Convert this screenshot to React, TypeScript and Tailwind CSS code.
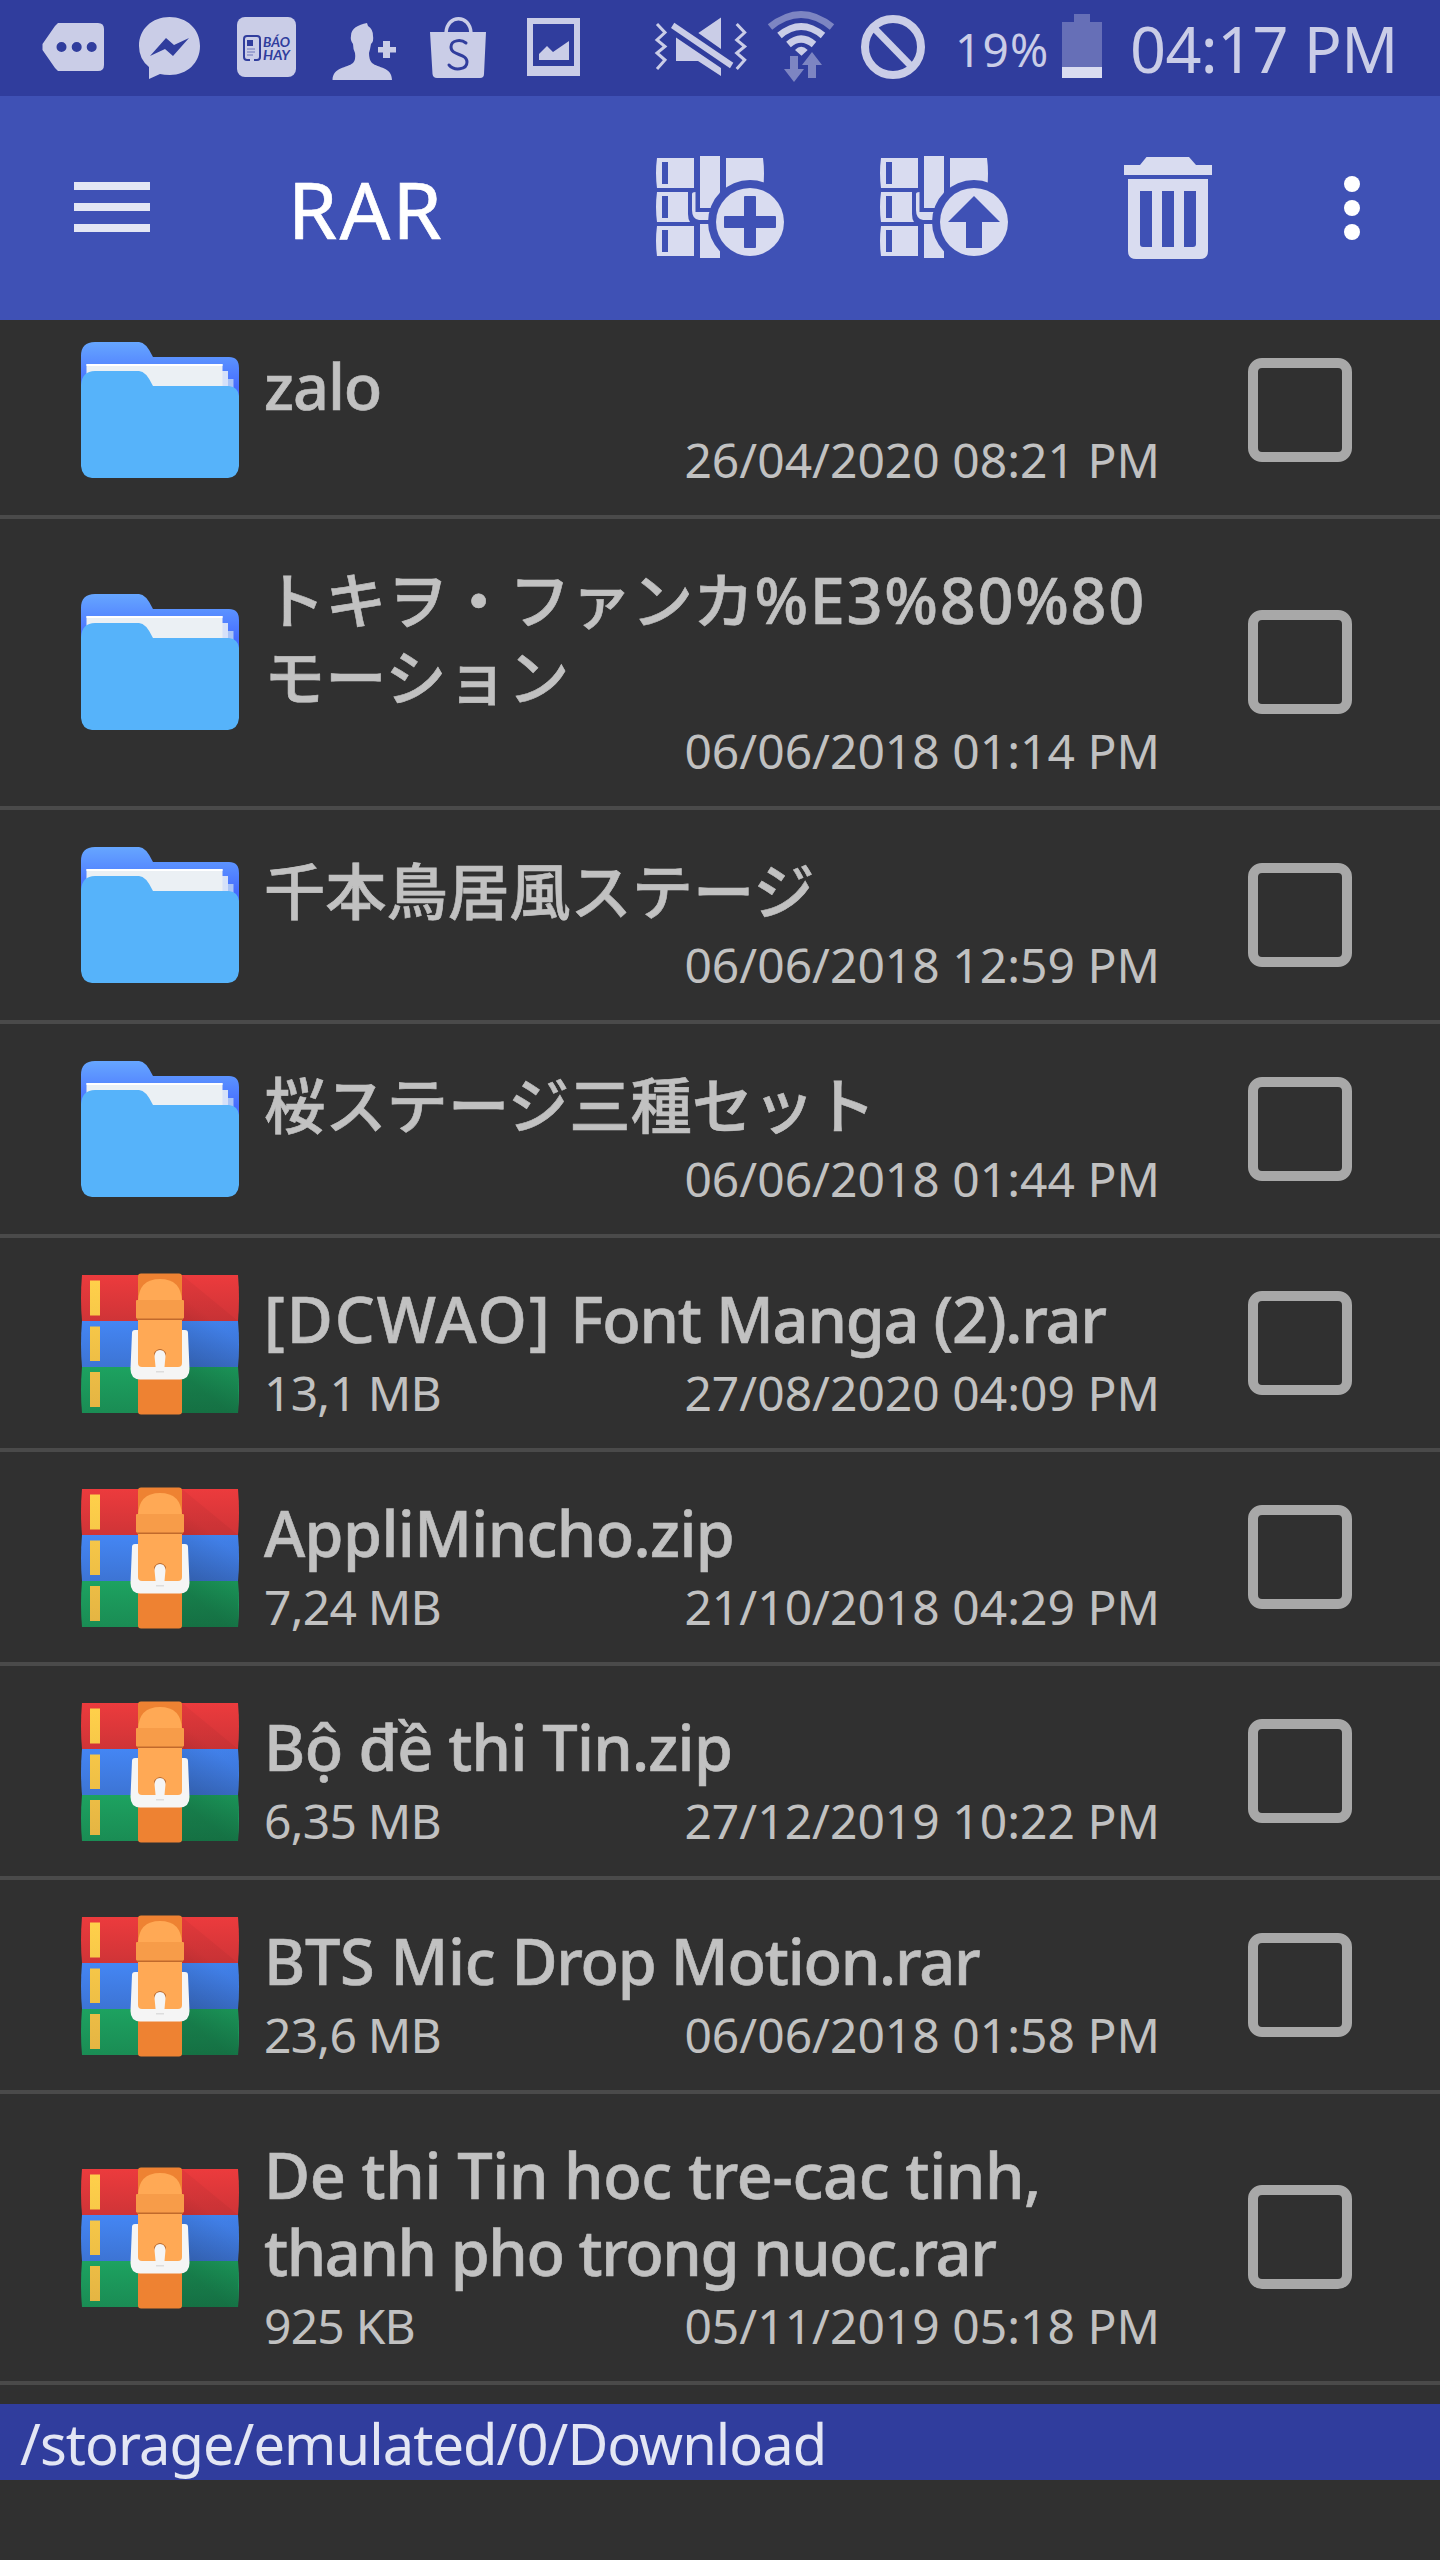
import React from 'react';

type Segment = [text: string, style: string];

const rows: { kind: 'folder' | 'rar'; name: Segment[][]; size: string; date: string }[] = [
  { kind: 'folder', name: [[['zalo', 'tracking-[-1.100px]']]], size: '', date: '26/04/2020 08:21 PM' },
  {
    kind: 'folder',
    name: [[['トキヲ・ファンカ', 'text-[61.300px]'], ['%E3%80%80', 'tracking-[1.700px]']], [['モーション', 'text-[61.300px]']]],
    size: '',
    date: '06/06/2018 01:14 PM',
  },
  { kind: 'folder', name: [[['千本鳥居風ステージ', 'text-[61.300px]']]], size: '', date: '06/06/2018 12:59 PM' },
  { kind: 'folder', name: [[['桜ステージ三種セット', 'text-[61.300px]']]], size: '', date: '06/06/2018 01:44 PM' },
  { kind: 'rar', name: [[['[DCWAO] ', 'tracking-[2px]'], ['Font Manga (2).rar', 'tracking-[-1.200px]']]], size: '13,1 MB', date: '27/08/2020 04:09 PM' },
  { kind: 'rar', name: [[['AppliMincho.zip', 'tracking-[-0.650px]']]], size: '7,24 MB', date: '21/10/2018 04:29 PM' },
  { kind: 'rar', name: [[['Bộ ', 'tracking-[-0.500px]'], ['đề thi Tin.zip', 'tracking-[-0.750px]']]], size: '6,35 MB', date: '27/12/2019 10:22 PM' },
  { kind: 'rar', name: [[['BTS Mic ', 'tracking-[-0.300px]'], ['Drop Motion.rar', 'tracking-[-1.200px]']]], size: '23,6 MB', date: '06/06/2018 01:58 PM' },
  {
    kind: 'rar',
    name: [[['De thi Tin hoc tre-cac tinh,', 'tracking-[-0.350px]']], [['thanh pho trong nuoc.rar', 'tracking-[-1.400px]']]],
    size: '925 KB',
    date: '05/11/2019 05:18 PM',
  },
];

function Folder() {
  return (
    <svg width="158" height="136" viewBox="0 0 158 136" className="block">
      <defs>
        <linearGradient id="fb" x1="0" y1="0" x2="0" y2="1">
          <stop offset="0" stopColor="#66a6ff" />
          <stop offset="0.75" stopColor="#466dff" />
        </linearGradient>
      </defs>
      <path d="M0 14Q0 0 14 0H58Q65 0 72 15H148Q158 15 158 26V60H0Z" fill="url(#fb)" />
      <path d="M140 37h12.500v20h-12.500z" fill="#a9c3f6" />
      <path d="M135 29h12v25h-12z" fill="#d5e1f9" />
      <path d="M5.500 22h136v30h-136z" fill="#ebf0f4" />
      <path d="M5.500 22h136v2h-136z" fill="#fff" />
      <path d="M0 43Q1 29 14 29H58Q65 29 72 44H148Q157 45 158 54V124Q157 135 147 136H11Q1 135 0 124Z" fill="#56b3fa" />
    </svg>
  );
}

function Rar() {
  return (
    <svg width="158" height="142" viewBox="0 0 158 142" className="block">
      <defs>
        <linearGradient id="r" x1="0" y1="0" x2="0" y2="1"><stop offset="0" stopColor="#ec3b3d" /><stop offset="1" stopColor="#cf3437" /></linearGradient>
        <linearGradient id="b" x1="0" y1="0" x2="0" y2="1"><stop offset="0" stopColor="#4486f4" /><stop offset="1" stopColor="#3d74d4" /></linearGradient>
        <linearGradient id="g" x1="0" y1="0" x2="0" y2="1"><stop offset="0" stopColor="#1da260" /><stop offset="1" stopColor="#1a8c54" /></linearGradient>
        <linearGradient id="y" x1="0" y1="0" x2="0" y2="1"><stop offset="0" stopColor="#ffd04a" /><stop offset="1" stopColor="#e5b543" /></linearGradient>
        <linearGradient id="s" gradientUnits="userSpaceOnUse" x1="101" y1="100" x2="140" y2="55"><stop offset="0" stopColor="#000" stopOpacity="0.2" /><stop offset="1" stopColor="#000" stopOpacity="0.04" /></linearGradient>
      </defs>
      <path d="M1 2H157Q159 25 157 48H1Q-1 25 1 2Z" fill="url(#r)" />
      <path d="M1 48H157Q159 71 157 94H1Q-1 71 1 48Z" fill="url(#b)" />
      <path d="M1 94H157Q159 117 157 140H1Q-1 117 1 94Z" fill="url(#g)" />
      <path d="M101 2L157 48V140H101Z" fill="url(#s)" />
      <path d="M9 7.500h10v35H9zM9 53.500h10v34.500H9zM9 99h10v35H9z" fill="url(#y)" />
      <rect x="57" y="0.500" width="44" height="141" rx="3" fill="#ee8232" />
      <path d="M54 57Q51 57 51 60L49.500 96Q49.500 106 59 106.500H99Q108.500 106 108.500 96L107 60Q107 57 104 57Z" fill="#f5f5f5" />
      <path d="M57 40V28Q58 6 79 6Q100 6 101 28V90Q101 94 97 94H61Q57 94 57 90Z" fill="#ffa955" />
      <path d="M56 44h46v3H56z" fill="#c0692c" />
      <rect x="55" y="27" width="48" height="18.500" rx="1" fill="#f79c49" />
      <path d="M73 80Q79 72 85 80L84 84H74Z" fill="#b86b32" />
      <path d="M75 99L73.500 83Q74 77 79 77Q84 77 84.500 83L83 99Z" fill="#f5f5f5" />
      <path d="M75 98h8v1.500h-8z" fill="#ddd" />
    </svg>
  );
}

function Archive({ id, up }: { id: string; up?: boolean }) {
  return (
    <svg width="130" height="104" viewBox="0 0 130 104" className="block">
      <mask id={id}>
        <rect width="130" height="104" fill="#fff" />
        <circle cx="94" cy="67" r="42" fill="#000" />
      </mask>
      <g fill="#d9dcf0">
        <path mask={`url(#${id})`} d="M1 3H38V33H1Q-1 18 1 3ZM6 7V29H12V7ZM1 37H32V59Q32 64 34 67H1Q-1 52 1 37ZM6 41V63H12V41ZM1 71H38V101H1Q-1 86 1 71ZM6 75V97H12V75ZM44 1H64V53H44ZM70 3H107Q109 18 107 36V90H70ZM36 39Q36 37 39.500 37V57H60V65H43Q36 64 36 55ZM44 69H64V103H44Z" fillRule="evenodd" />
        <circle cx="94" cy="67" r="34" />
      </g>
      {up ? (
        <path d="M94 41L120 67H102V93H86V67H68Z" fill="#3f51b5" />
      ) : (
        <path d="M89 41H99Q100 41 100 42V61H119Q120 61 120 62V72Q120 73 119 73H100V92Q100 93 99 93H89Q88 93 88 92V73H69Q68 73 68 72V62Q68 61 69 61H88V42Q88 41 89 41Z" fill="#3f51b5" />
      )}
    </svg>
  );
}

function StatusIcons() {
  return (
    <svg width="1120" height="96" viewBox="0 0 1120 96" className="block shrink-0" fill="#cacde7">
      <path fillRule="evenodd" d="M58 23H98Q104 23 104 29V65Q104 71 98 71H58L55 68L42.500 50V44L55 26ZM56.500 47a5 5 0 1 0 10 0a5 5 0 1 0-10 0ZM71.700 47a5 5 0 1 0 10 0a5 5 0 1 0-10 0ZM86.700 47a5 5 0 1 0 10 0a5 5 0 1 0-10 0Z" />
      <path d="M149 79V67Q139 59 139 46C139 29 152 17 169.500 17S200 29 200 46S187 75 170 75Q164 75 160 74Z" />
      <path d="M150 56L166 38L174 45L189 38L173 56L165 49Z" fill="#303d9d" />
      <rect x="237" y="17" width="59" height="60" rx="8" />
      <g fill="none" stroke="#303d9d" strokeWidth="2">
        <path d="M250 60H247Q244 60 244 57V39Q244 36 247 36H257Q260 36 260 39V57Q260 60 257 60H254" />
        <path d="M247 49h8M247 52h8M247 55h6" strokeWidth="1" opacity="0.6" />
      </g>
      <rect x="247" y="40" width="6" height="6" fill="#303d9d" />
      <g fontSize="14" fontWeight="700" fontStyle="italic" fontFamily="Lato, sans-serif" fill="#303d9d">
        <text x="263" y="47" textLength="27" lengthAdjust="spacingAndGlyphs">BÁO</text>
        <text x="263" y="60" textLength="27" lengthAdjust="spacingAndGlyphs">HAY</text>
      </g>
      <path d="M367 23L368 26Q373 29 373 36Q374 41 371 44Q370 50 369 53Q369 60 372 63C378 68 392 67 392 80H332.500C333 67 347 68 353 63Q356 60 355 53Q353 49 353 44Q350 40 351 36C351 28 358 25 367 23Z" />
      <path d="M383 41h7v6h6v5.500h-6V58h-7v-5.500h-5V47h5z" />
      <path d="M430 32H486L484 74Q484 78 480 78H437Q433 78 432.500 74Z" />
      <path d="M446 33C447 14 470 14 471 33" fill="none" stroke="#cacde7" strokeWidth="3.500" />
      <path d="M466 43C461 39 451 40 451 47C451 56 467 53 467 62C467 70 454 71 449 65" fill="none" stroke="#303d9d" strokeWidth="3" strokeLinecap="round" />
      <path fillRule="evenodd" d="M527 18H580V76H527ZM533 24V66H574V24Z" />
      <path d="M539 60V54L547 46L553 52L569 41V60Z" />
      <g fill="none" stroke="#cacde7" strokeWidth="3">
        <path d="M657 24L665 32.500L657 40L665 46.500L657 53L665 60L657 69" />
        <path d="M736.700 24L744.700 32.500L736.700 40L744.700 46.500L736.700 53L744.700 60L736.700 69" />
      </g>
      <path d="M721 17.500V49L698.300 33ZM676 37.500L721 68V76L698 61H676Z" />
      <path d="M674.300 22.700L733.300 62.700L730 68.300L671 28Z" />
      <g fill="none" stroke="#cacde7">
        <path d="M770 27Q801 2 832 27" strokeWidth="7" opacity="0.5" />
        <path d="M779.500 35.500Q801 17.500 823 35.500" strokeWidth="7" />
        <path d="M788.500 44.500Q801 33.500 814 44.500" strokeWidth="7" />
        <circle cx="893" cy="47" r="28" strokeWidth="8" />
        <path d="M874 28L911 66" strokeWidth="7" />
      </g>
      <path d="M795 50Q801 43.500 807.700 50L801.500 55.700Z" />
      <g opacity="0.5"><path d="M790 56h8v13h6l-10 13l-10-13h6zM808 78h8V65h6l-10-13l-10 13h6z" /></g>
      <path d="M1062 22h12v-8h16v8h12v45h-40z" opacity="0.35" />
      <path d="M1062 67h40v11h-40z" fill="#d9dcf0" />
    </svg>
  );
}

export default function App() {
  return (
    <div className="flex h-[2560px] w-[1440px] flex-col overflow-hidden bg-[#303030] font-['Noto_Sans','Noto_Sans_CJK_JP',sans-serif] text-[#c1c1c1]">
      <header className="flex h-24 shrink-0 bg-[#303d9d] text-[#cacde7]">
        <StatusIcons />
        <span className="-ml-[165px] mt-[17px] h-16 w-[95px] whitespace-nowrap text-[46px] leading-[64px] tracking-[1.200px]">19%</span>
        <span className="ml-[80px] mt-[7px] whitespace-nowrap text-[63px] leading-[84px] tracking-[-0.600px]">04:17 PM</span>
      </header>
      <nav className="flex h-56 shrink-0 bg-[#3f51b5] pt-[59px]">
        <div className="ml-[74px] mt-[27px] flex w-[76px] flex-col gap-[13px]">
          <i className="h-2 bg-[#e3e6f4]" />
          <i className="h-2 bg-[#e3e6f4]" />
          <i className="h-2 bg-[#e3e6f4]" />
        </div>
        <h1 className="ml-[138px] mt-[4px] w-[368px] text-[79px] leading-[100px] tracking-[2.500px] text-white [-webkit-text-stroke:0.700px_white]">RAR</h1>
        <Archive id="m1" />
        <div className="ml-[94px]"><Archive id="m2" up /></div>
        <svg width="88" height="104" viewBox="0 0 88 104" className="ml-[114px] block" fill="#d9dcf0">
          <path d="M0 10H16L22.500 2H65L72 10H88V20H0Z" />
          <path fillRule="evenodd" d="M4 24H84V96Q84 104 76 104H12Q4 104 4 96ZM16 36V89Q16 92 19 92H28V36ZM38 36V92H50V36ZM60 36V92H69Q72 92 72 89V36Z" />
        </svg>
        <div className="ml-[132px] mt-[21px] flex flex-col gap-2">
          <i className="size-4 rounded-full bg-white" />
          <i className="size-4 rounded-full bg-white" />
          <i className="size-4 rounded-full bg-white" />
        </div>
      </nav>
      <main className="flex h-[2084px] shrink-0 flex-col justify-start overflow-hidden">
        <div className="-mt-[15px] flex flex-col">
          {rows.map((r) => (
            <div key={r.date} className={`flex shrink-0 items-center border-b-4 border-[#4a4a4a] ${r.name.length > 1 ? 'h-[291px] pb-[2px]' : 'h-[214px]'}`}>
              <div className="ml-[81px] w-[158px] shrink-0">{r.kind === 'folder' ? <Folder /> : <div className="pt-[2px]"><Rar /></div>}</div>
              <div className="ml-[25px] h-full w-[896px] shrink-0 pt-[42px]">
                <div className="text-[63px] font-medium [-webkit-text-stroke:0.600px_#c1c1c1]">
                  {r.name.map((line, i) => (
                    <div key={i} className="h-[77px] whitespace-pre leading-[77px]">
                      {line.map(([text, style]) => (
                        <span key={text} className={style}>{text}</span>
                      ))}
                    </div>
                  ))}
                </div>
                <div className="flex h-[72px] justify-between whitespace-nowrap text-[48px] leading-[72px]">
                  <span className="tracking-[-0.800px]">{r.size}</span>
                  <span>{r.date}</span>
                </div>
              </div>
              <div className="ml-[88px] size-[104px] rounded-[14px] border-[10px] border-[#a8a8a8]" />
            </div>
          ))}
        </div>
      </main>
      <footer className="h-[76px] shrink-0 whitespace-nowrap bg-[#303d9d] pl-[20px] text-[56px] leading-[79px] tracking-[-0.950px] text-[#e3e6f4]">/storage/emulated/0/Download</footer>
    </div>
  );
}
